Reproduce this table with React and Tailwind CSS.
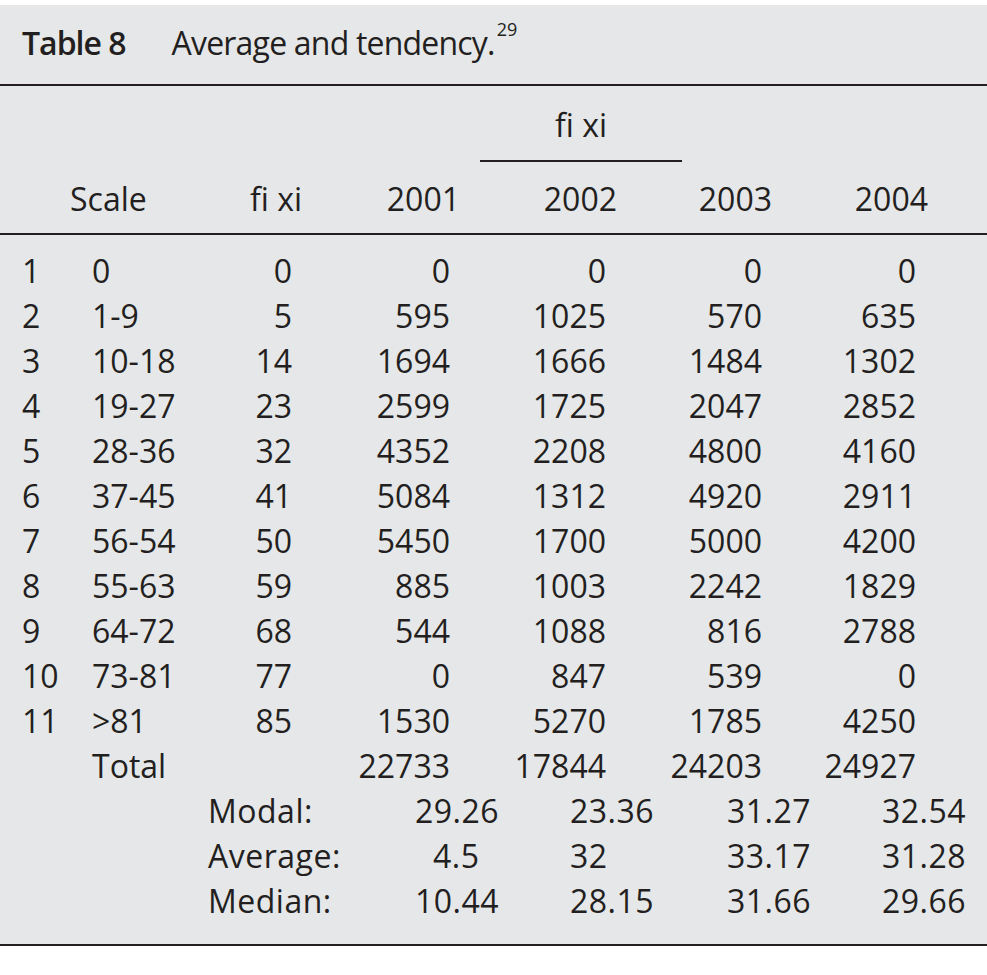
import React from "react";

const rows = [
  ["1", "0", "0", "0", "0", "0", "0"],
  ["2", "1-9", "5", "595", "1025", "570", "635"],
  ["3", "10-18", "14", "1694", "1666", "1484", "1302"],
  ["4", "19-27", "23", "2599", "1725", "2047", "2852"],
  ["5", "28-36", "32", "4352", "2208", "4800", "4160"],
  ["6", "37-45", "41", "5084", "1312", "4920", "2911"],
  ["7", "56-54", "50", "5450", "1700", "5000", "4200"],
  ["8", "55-63", "59", "885", "1003", "2242", "1829"],
  ["9", "64-72", "68", "544", "1088", "816", "2788"],
  ["10", "73-81", "77", "0", "847", "539", "0"],
  ["11", ">81", "85", "1530", "5270", "1785", "4250"],
  ["", "Total", "", "22733", "17844", "24203", "24927"],
];

const stats = [
  ["Modal:", "29.26", "23.36", "31.27", "32.54"],
  ["Average:", "4.5", "32", "33.17", "31.28"],
  ["Median:", "10.44", "28.15", "31.66", "29.66"],
];

const grid = "grid grid-cols-[70px_140px_70px_158px_157px_155px_156px] pl-[22px]";

export default function App() {
  return (
    <div
      className="w-[987px] h-[975px] bg-white pt-[5px] text-[#231f20] text-[32px] leading-[45px]"
      style={{ fontFamily: '"Open Sans", "Noto Sans", sans-serif' }}
    >
      <div className="bg-[#e6e7e9]">
        {/* Title */}
        <div className="pt-[15px] pb-[19px] pl-[22px] whitespace-nowrap">
          <span className="font-semibold tracking-[-1px]">Table 8</span>
          <span className="ml-[46px] tracking-[-0.8px]">Average and tendency.</span>
          <span className="text-[18px] leading-none relative top-[-19px] ml-[2px]">29</span>
        </div>
        <div className="h-[2px] bg-[#231f20]" />

        {/* Header */}
        <div className="pt-[16px] pb-[12px]">
          <div className={grid}>
            <div className="col-start-5 col-span-2">
              <div className="ml-[20px] w-[202px] text-center">fi xi</div>
              <div className="ml-[20px] w-[202px] h-[2px] bg-[#231f20] mt-[13px]" />
            </div>
          </div>
          <div className={grid + " mt-[14px]"}>
            <div className="col-span-2 pl-[48px]">Scale</div>
            <div className="text-right">fi xi</div>
            <div className="text-right">2001</div>
            <div className="text-right">2002</div>
            <div className="text-right">2003</div>
            <div className="text-right">2004</div>
          </div>
        </div>
        <div className="h-[2px] bg-[#231f20]" />

        {/* Body */}
        <div className="pt-[13px] pb-[21px]">
          {rows.map((r, i) => (
            <div key={i} className={grid}>
              <div>{r[0]}</div>
              <div>{r[1]}</div>
              <div className="text-right pr-[10px]">{r[2]}</div>
              <div className="text-right pr-[10px]">{r[3]}</div>
              <div className="text-right pr-[11px]">{r[4]}</div>
              <div className="text-right pr-[10px]">{r[5]}</div>
              <div className="text-right pr-[12px]">{r[6]}</div>
            </div>
          ))}
          {stats.map((s, i) => (
            <div
              key={i}
              className="grid grid-cols-[207px_155px_157px_155px_1fr] pl-[208px] tracking-[0.5px]"
            >
              <div>{s[0]}</div>
              <div className={s[1] === "4.5" ? "pl-[18px]" : ""}>{s[1]}</div>
              <div>{s[2]}</div>
              <div>{s[3]}</div>
              <div>{s[4]}</div>
            </div>
          ))}
        </div>
      </div>
      <div className="h-[2px] bg-[#231f20]" />
    </div>
  );
}
